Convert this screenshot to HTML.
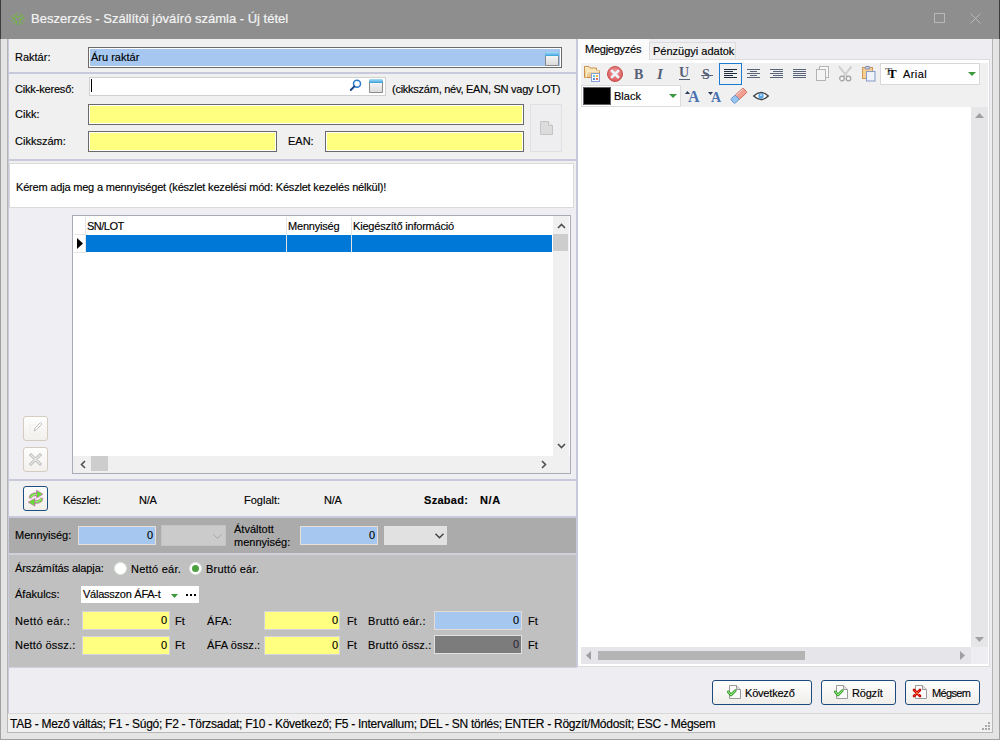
<!DOCTYPE html>
<html><head><meta charset="utf-8">
<style>
*{margin:0;padding:0;box-sizing:border-box}
html,body{width:1000px;height:741px;overflow:hidden;background:#e4e4e4;font-family:"Liberation Sans",sans-serif;font-size:11px;color:#000}
.a{position:absolute}
.t{position:absolute;white-space:nowrap;line-height:14px;font-size:11px;color:#000;-webkit-text-stroke:0.15px #000}
.f{position:absolute;border:1px solid #6a6a6a;box-shadow:inset 0 0 0 1px #fff}
.y{background:#ffff80}
.b{background:#a6c8f0}
svg{position:absolute;overflow:visible}
</style></head><body>
<!-- window frame -->
<div class="a" style="left:0;top:0;width:1px;height:740px;background:#a0a0a0"></div>
<div class="a" style="left:999px;top:0;width:1px;height:740px;background:#a0a0a0"></div>
<div class="a" style="left:0;top:739px;width:1000px;height:1px;background:#a0a0a0"></div>
<div class="a" style="left:0;top:740px;width:1000px;height:1px;background:#fff"></div>
<!-- title -->
<div class="a" style="left:0;top:0;width:1000px;height:39px;background:#8e8e8e"></div>
<div class="a" style="left:0;top:0;width:1px;height:39px;background:#3c3c3c"></div>
<div class="a" style="left:999px;top:0;width:1px;height:39px;background:#3c3c3c"></div>
<svg style="left:11px;top:12px" width="14" height="14" viewBox="0 0 14 14">
 <g fill="none" stroke="#76b648" stroke-width="1.3" stroke-linecap="round">
 <path d="M2.9 3.1Q7.2 6.7 11.5 3.1"/><path d="M1.2 5.5Q5.4 6.5 5.5 12.3"/><path d="M12.8 5.5Q8.5 6.5 8.5 12.5"/></g>
 <g fill="#76b648"><circle cx="5.5" cy="1.5" r="0.8"/><circle cx="8.5" cy="1.5" r="0.8"/><circle cx="1.1" cy="8.6" r="0.8"/><circle cx="2.6" cy="11.3" r="0.8"/><circle cx="13.1" cy="8.8" r="0.8"/><circle cx="11.5" cy="11.3" r="0.8"/></g>
</svg>
<div class="t" style="left:31px;top:11px;font-size:13px;line-height:16px;color:#f4f4f4;-webkit-text-stroke:0.2px #f4f4f4">Beszerzés - Szállítói jóváíró számla - Új tétel</div>
<div class="a" style="left:934px;top:13px;width:11px;height:10px;border:1px solid #b8b8b8"></div>
<svg style="left:970px;top:13px" width="11" height="11"><path d="M0.5 0.5L10.5 10.5M10.5 0.5L0.5 10.5" stroke="#b8b8b8" stroke-width="1"/></svg>

<!-- inner borders -->
<div class="a" style="left:7px;top:39px;width:1px;height:694px;background:#b4b4b4"></div>
<div class="a" style="left:8px;top:39px;width:1px;height:674px;background:#c8cadc"></div>
<div class="a" style="left:992px;top:39px;width:1px;height:694px;background:#b4b4b4"></div>

<!-- left panel bg -->
<div class="a" style="left:9px;top:39px;width:567px;height:628px;background:#f0f0f0"></div>
<div class="a" style="left:9px;top:208px;width:567px;height:271px;background:#efeff3"></div>
<div class="a" style="left:576px;top:39px;width:2px;height:628px;background:#c8cadc"></div>
<div class="a" style="left:578px;top:39px;width:414px;height:628px;background:#eeeef2"></div>
<div class="a" style="left:9px;top:667px;width:983px;height:46px;background:#eeeef2"></div>

<!-- Raktár -->
<div class="t" style="left:15px;top:50px">Raktár:</div>
<div class="f b" style="left:88px;top:47px;width:474px;height:21px;box-shadow:inset 0 0 0 1px #fff"></div>
<div class="t" style="left:91px;top:50px">Áru raktár</div>
<div class="a" style="left:545px;top:52px;width:14px;height:14px;background:linear-gradient(#fdfdfd,#dcdcdc);border:1px solid #8a8a8a;border-radius:2px 2px 0 0"></div>
<div class="a" style="left:545px;top:52px;width:14px;height:4px;background:linear-gradient(#a8e0fa,#3aa0dc);border-radius:2px 2px 0 0"></div>
<div class="a" style="left:9px;top:72px;width:567px;height:2px;background:#c8cadc"></div>

<!-- Cikk -->
<div class="t" style="left:15px;top:82px;letter-spacing:-0.18px">Cikk-kereső:</div>
<div class="f" style="left:89px;top:77px;width:297px;height:19px;background:#fff;border-color:#d0d0d0"></div>
<div class="a" style="left:91px;top:79px;width:1px;height:13px;background:#000"></div>
<svg style="left:349px;top:79px" width="13" height="13" viewBox="0 0 13 13"><circle cx="8" cy="4.8" r="3.5" fill="none" stroke="#2a78c8" stroke-width="1.5"/><path d="M5.4 7.4L1.8 11" stroke="#1a4488" stroke-width="2" stroke-linecap="round"/></svg>
<div class="a" style="left:369px;top:79px;width:14px;height:14px;background:linear-gradient(#fdfdfd,#dcdcdc);border:1px solid #8a8a8a;border-radius:2px 2px 0 0"></div>
<div class="a" style="left:369px;top:79px;width:14px;height:4px;background:linear-gradient(#a8e0fa,#3aa0dc);border-radius:2px 2px 0 0"></div>
<div class="t" style="left:392px;top:82px;letter-spacing:-0.25px">(cikkszám, név, EAN, SN vagy LOT)</div>
<div class="t" style="left:15px;top:107px">Cikk:</div>
<div class="f y" style="left:88px;top:104px;width:436px;height:21px"></div>
<div class="t" style="left:15px;top:134px">Cikkszám:</div>
<div class="f y" style="left:88px;top:131px;width:189px;height:21px"></div>
<div class="t" style="left:288px;top:134px">EAN:</div>
<div class="f y" style="left:325px;top:131px;width:199px;height:21px"></div>
<div class="a" style="left:530px;top:104px;width:32px;height:48px;border:1px solid #e0e0e4;background:#eeeef0"></div>
<svg style="left:540px;top:121px" width="13" height="14" viewBox="0 0 13 14"><path d="M0.5 0.5H8.5L12.5 4.5V13.5H0.5Z" fill="#dcdcdc" stroke="#c4c4c4"/><path d="M8.5 0.5V4.5H12.5" fill="#eee" stroke="#c4c4c4"/></svg>
<div class="a" style="left:9px;top:159px;width:567px;height:2px;background:#c8cadc"></div>

<!-- message -->
<div class="a" style="left:9px;top:163px;width:565px;height:45px;background:#fff;border:1px solid #dadada"></div>
<div class="t" style="left:16px;top:180px;letter-spacing:-0.19px">Kérem adja meg a mennyiséget (készlet kezelési mód: Készlet kezelés nélkül)!</div>

<!-- grid -->
<div class="a" style="left:72px;top:215px;width:499px;height:259px;border:1px solid #a8acb4;background:#fff"></div>
<div class="t" style="left:87px;top:219px;letter-spacing:-0.5px">SN/LOT</div>
<div class="t" style="left:288px;top:219px;letter-spacing:-0.2px">Mennyiség</div>
<div class="t" style="left:353px;top:219px;letter-spacing:-0.2px">Kiegészítő információ</div>
<div class="a" style="left:86px;top:235px;width:466px;height:17px;background:#0078d7"></div>
<div class="a" style="left:85px;top:217px;width:1px;height:35px;background:#e4e4e4"></div>
<div class="a" style="left:286px;top:217px;width:1px;height:35px;background:#e4e4e4"></div>
<div class="a" style="left:351px;top:217px;width:1px;height:35px;background:#e4e4e4"></div>
<div class="a" style="left:74px;top:234px;width:12px;height:1px;background:#e4e4e4"></div>
<div class="a" style="left:74px;top:252px;width:12px;height:1px;background:#e4e4e4"></div>
<svg style="left:77px;top:238px" width="7" height="11"><path d="M0 0L6 5.5L0 11Z" fill="#000"/></svg>
<!-- vscroll -->
<div class="a" style="left:553px;top:216px;width:16px;height:240px;background:#f0f0f0"></div>
<svg style="left:557px;top:223px" width="9" height="6"><path d="M1 5L4.5 1.5L8 5" fill="none" stroke="#505050" stroke-width="1.6"/></svg>
<div class="a" style="left:553px;top:234px;width:15px;height:17px;background:#cdcdcd"></div>
<svg style="left:557px;top:443px" width="9" height="6"><path d="M1 1L4.5 4.5L8 1" fill="none" stroke="#505050" stroke-width="1.6"/></svg>
<!-- hscroll -->
<div class="a" style="left:73px;top:456px;width:497px;height:17px;background:#f0f0f0"></div>
<svg style="left:80px;top:460px" width="6" height="9"><path d="M5 1L1.5 4.5L5 8" fill="none" stroke="#505050" stroke-width="1.6"/></svg>
<div class="a" style="left:91px;top:456px;width:17px;height:15px;background:#cdcdcd"></div>
<svg style="left:541px;top:460px" width="6" height="9"><path d="M1 1L4.5 4.5L1 8" fill="none" stroke="#505050" stroke-width="1.6"/></svg>

<div class="a" style="left:23px;top:416px;width:25px;height:25px;border:1px solid #d4ccc0;border-radius:3px;background:linear-gradient(#fefefe,#f2f0ec)"></div>
<svg style="left:29px;top:421px" width="14" height="14" viewBox="0 0 14 14"><rect x="1" y="4" width="9" height="9" fill="none" stroke="#f0f0f0"/><path d="M5 10L6 7L11.5 1.5L13 3L7.5 8.5Z" fill="#fff" stroke="#b8b8b8" stroke-width="0.9"/></svg>
<div class="a" style="left:23px;top:447px;width:25px;height:25px;border:1px solid #d4ccc0;border-radius:3px;background:linear-gradient(#fefefe,#f2f0ec)"></div>
<svg style="left:29px;top:453px" width="13" height="13" viewBox="0 0 13 13"><path d="M2 0.5L6.5 5L11 0.5L12.5 2L8 6.5L12.5 11L11 12.5L6.5 8L2 12.5L0.5 11L5 6.5L0.5 2Z" fill="#e8e8e8" stroke="#a8a8a8" stroke-width="0.9"/></svg>
<div class="a" style="left:9px;top:479px;width:567px;height:2px;background:#c8cadc"></div>

<!-- Készlet row -->
<div class="a" style="left:23px;top:486px;width:25px;height:25px;border:1px solid #1c4e80;border-radius:3px;background:linear-gradient(#fefefe,#f0eee8)"></div>
<svg style="left:28px;top:490px" width="16" height="17" viewBox="0 0 16 17">
 <path d="M8.5 0L15 4.2L8.5 8.2ZM1 7.8Q1.5 2.8 8.7 2.6L8.7 5.6Q4.2 5.6 3.2 8.4Z" fill="#66dd33" stroke="#e040d8" stroke-width="0.5" stroke-linejoin="round"/>
 <path d="M7 8.2L0 12.2L7 16.2ZM15 8.4Q14.5 13.4 7 13.6L7 10.6Q11.5 10.6 12.8 7.8Z" fill="#66dd33" stroke="#e040d8" stroke-width="0.5" stroke-linejoin="round"/>
 <path d="M2.8 7.5Q3.5 4.6 8.6 4.3M13.2 8.5Q12.5 11.6 7.2 12" fill="none" stroke="#aaf088" stroke-width="0.9"/>
</svg>
<div class="t" style="left:63px;top:493px;letter-spacing:-0.2px">Készlet:</div>
<div class="t" style="left:139px;top:493px;letter-spacing:-0.3px">N/A</div>
<div class="t" style="left:244px;top:493px">Foglalt:</div>
<div class="t" style="left:324px;top:493px;letter-spacing:-0.3px">N/A</div>
<div class="t" style="left:424px;top:493px;font-weight:bold;letter-spacing:0.3px">Szabad:</div>
<div class="t" style="left:480px;top:493px;font-weight:bold;letter-spacing:0.6px">N/A</div>
<div class="a" style="left:9px;top:516px;width:567px;height:2px;background:#c8cadc"></div>

<!-- Mennyiség row -->
<div class="a" style="left:9px;top:518px;width:567px;height:35px;background:#ababab"></div>
<div class="t" style="left:15px;top:528px">Mennyiség:</div>
<div class="a b" style="left:78px;top:526px;width:78px;height:19px;border:1px solid #e8e0d8"></div>
<div class="t" style="left:147px;top:528px">0</div>
<div class="a" style="left:161px;top:525px;width:65px;height:21px;background:#cbcbcb;border:1px solid #c4c4c4"></div>
<svg style="left:213px;top:534px" width="9" height="5"><path d="M0.5 0.5L4.5 4.5L8.5 0.5" fill="none" stroke="#a4a4a4" stroke-width="1"/></svg>
<div class="t" style="left:234px;top:523px;line-height:13px">Átváltott<br>mennyiség:</div>
<div class="a b" style="left:300px;top:526px;width:78px;height:19px;border:1px solid #e8e0d8"></div>
<div class="t" style="left:369px;top:528px">0</div>
<div class="a" style="left:384px;top:526px;width:63px;height:19px;background:#e1e1e1"></div>
<svg style="left:435px;top:533px" width="9" height="6"><path d="M0.5 0.8L4.5 4.8L8.5 0.8" fill="none" stroke="#404040" stroke-width="1.4"/></svg>
<div class="a" style="left:9px;top:553px;width:567px;height:2px;background:#d0d0dc"></div>

<!-- Árszámítás section -->
<div class="a" style="left:9px;top:555px;width:567px;height:112px;background:#c0c0c0"></div>
<div class="a" style="left:9px;top:667px;width:568px;height:1px;background:#d0d0e0"></div>
<div class="t" style="left:15px;top:561px;letter-spacing:-0.1px">Árszámítás alapja:</div>
<div class="a" style="left:114px;top:562px;width:13px;height:13px;border-radius:50%;background:#fff;border:1px solid #dde8dd"></div>
<div class="t" style="left:131px;top:562px;letter-spacing:0.23px">Nettó eár.</div>
<div class="a" style="left:189px;top:562px;width:13px;height:13px;border-radius:50%;background:#fff;border:1px solid #dde8dd"></div>
<div class="a" style="left:192px;top:565px;width:7px;height:7px;border-radius:50%;background:#4ca040"></div>
<div class="t" style="left:206px;top:562px;letter-spacing:0.2px">Bruttó eár.</div>
<div class="t" style="left:15px;top:587px">Áfakulcs:</div>
<div class="a" style="left:81px;top:586px;width:118px;height:17px;background:#fff"></div>
<div class="t" style="left:83px;top:587px;letter-spacing:-0.25px">Válasszon ÁFA-t</div>
<svg style="left:171px;top:594px" width="7" height="4"><path d="M0 0H7L3.5 4Z" fill="#3c9a3c"/></svg>
<div class="a" style="left:186px;top:594px;width:2px;height:2px;background:#000"></div>
<div class="a" style="left:190px;top:594px;width:2px;height:2px;background:#000"></div>
<div class="a" style="left:194px;top:594px;width:2px;height:2px;background:#000"></div>

<div class="t" style="left:15px;top:614px;letter-spacing:0.4px">Nettó eár.:</div>
<div class="a y" style="left:82px;top:611px;width:88px;height:19px;border:1px solid #d4d4dc"></div>
<div class="t" style="left:161px;top:613px">0</div>
<div class="t" style="left:175px;top:614px">Ft</div>
<div class="t" style="left:207px;top:614px;letter-spacing:0.3px">ÁFA:</div>
<div class="a y" style="left:264px;top:611px;width:76px;height:19px;border:1px solid #d4d4dc"></div>
<div class="t" style="left:332px;top:613px">0</div>
<div class="t" style="left:347px;top:614px">Ft</div>
<div class="t" style="left:368px;top:614px;letter-spacing:0.33px">Bruttó eár.:</div>
<div class="a b" style="left:434px;top:611px;width:88px;height:19px;border:1px solid #e4dcd4"></div>
<div class="t" style="left:513px;top:613px">0</div>
<div class="t" style="left:528px;top:614px">Ft</div>

<div class="t" style="left:15px;top:638px;letter-spacing:0.2px">Nettó össz.:</div>
<div class="a y" style="left:82px;top:636px;width:88px;height:19px;border:1px solid #d4d4dc"></div>
<div class="t" style="left:161px;top:638px">0</div>
<div class="t" style="left:175px;top:638px">Ft</div>
<div class="t" style="left:207px;top:638px;letter-spacing:0.13px">ÁFA össz.:</div>
<div class="a y" style="left:264px;top:636px;width:76px;height:19px;border:1px solid #d4d4dc"></div>
<div class="t" style="left:332px;top:638px">0</div>
<div class="t" style="left:347px;top:638px">Ft</div>
<div class="t" style="left:368px;top:638px;letter-spacing:0.18px">Bruttó össz.:</div>
<div class="a" style="left:434px;top:635px;width:88px;height:19px;background:#7c7c7c;border:1px solid #e0e0e0"></div>
<div class="t" style="left:513px;top:637px;color:#302840;-webkit-text-stroke:0.15px #302840">0</div>
<div class="t" style="left:528px;top:638px">Ft</div>

<!-- right panel: tabs -->
<div class="a" style="left:578px;top:39px;width:71px;height:21px;background:#fbfbfb"></div>
<div class="t" style="left:585px;top:42px;letter-spacing:-0.25px">Megjegyzés</div>
<div class="a" style="left:649px;top:42px;width:87px;height:18px;background:#f0f0f0;border:1px solid #dcdcdc;border-bottom:none"></div>
<div class="t" style="left:653px;top:44px">Pénzügyi adatok</div>
<div class="a" style="left:578px;top:59px;width:412px;height:608px;background:#fff;border:1px solid #dcdcdc;border-left:none"></div>
<div class="a" style="left:578px;top:59px;width:71px;height:1px;background:#fbfbfb"></div>
<div class="a" style="left:581px;top:63px;width:407px;height:44px;background:#f0f0f0"></div>

<!-- toolbar row 1 -->
<svg style="left:584px;top:66px" width="16" height="16" viewBox="0 0 16 16">
 <defs><linearGradient id="fg" x1="0" y1="0" x2="0" y2="1"><stop offset="0" stop-color="#fdf0c8"/><stop offset="1" stop-color="#e8c080"/></linearGradient></defs>
 <path d="M0.5 11.5V0.5H5L6 2H12.5V4.5H15.5V11.5Z" fill="url(#fg)" stroke="#c8904a" stroke-width="1"/>
 <path d="M2 11.5L3.5 5H15.5" fill="none" stroke="#fff4d8" stroke-width="1"/>
 <rect x="7.5" y="7.5" width="8" height="8" fill="#fafcff" stroke="#8a9ed8" stroke-width="1"/>
 <rect x="9" y="9" width="2" height="2" fill="#5cc8d8"/><rect x="12" y="9" width="2" height="2" fill="#f0b838"/>
 <rect x="9" y="12" width="2" height="2" fill="#5c88e0"/><rect x="12" y="12" width="2" height="2" fill="#e87058"/>
</svg>
<svg style="left:607px;top:66px" width="16" height="16" viewBox="0 0 16 16">
 <defs><radialGradient id="rg" cx="0.5" cy="0.4" r="0.6"><stop offset="0" stop-color="#f4a0a0"/><stop offset="1" stop-color="#d85858"/></radialGradient></defs>
 <circle cx="8" cy="8" r="7.5" fill="url(#rg)" stroke="#c85050" stroke-width="1"/>
 <path d="M5 5L11 11M11 5L5 11" stroke="#eef2fa" stroke-width="2.6" stroke-linecap="square"/>
</svg>
<div class="a" style="left:634px;top:67px;font:bold 14px 'Liberation Serif';line-height:16px;color:#566078">B</div>
<div class="a" style="left:657px;top:66px;font:italic bold 15px 'Liberation Serif';line-height:16px;color:#566078">I</div>
<div class="a" style="left:679px;top:65px;font:bold 14px 'Liberation Serif';line-height:16px;color:#566078">U</div>
<div class="a" style="left:679px;top:79px;width:11px;height:1px;background:#566078"></div>
<div class="a" style="left:702px;top:67px;font:bold 14px 'Liberation Serif';line-height:16px;color:#566078">S</div>
<div class="a" style="left:701px;top:75px;width:12px;height:1px;background:#566078"></div>
<div class="a" style="left:719px;top:63px;width:23px;height:22px;border:1.5px solid #1a7ad4;background:#f0f0f0"></div>
<svg style="left:724px;top:69px" width="13" height="9"><g fill="#1e2a40"><rect y="0" width="13" height="1"/><rect y="2" width="9" height="1"/><rect y="4" width="13" height="1"/><rect y="6" width="9" height="1"/><rect y="8" width="13" height="1"/></g></svg>
<svg style="left:747px;top:69px" width="13" height="9"><g fill="#5a6478"><rect y="0" width="13" height="1"/><rect x="3" y="2" width="7" height="1"/><rect y="4" width="13" height="1"/><rect x="3" y="6" width="7" height="1"/><rect y="8" width="13" height="1"/></g></svg>
<svg style="left:770px;top:69px" width="13" height="9"><g fill="#5a6478"><rect y="0" width="13" height="1"/><rect x="3" y="2" width="10" height="1"/><rect y="4" width="13" height="1"/><rect x="3" y="6" width="10" height="1"/><rect y="8" width="13" height="1"/></g></svg>
<svg style="left:793px;top:69px" width="13" height="9"><g fill="#5a6478"><rect y="0" width="13" height="1"/><rect y="2" width="13" height="1"/><rect y="4" width="13" height="1"/><rect y="6" width="13" height="1"/><rect y="8" width="13" height="1"/></g></svg>
<svg style="left:816px;top:66px" width="14" height="16" viewBox="0 0 14 16"><rect x="3.5" y="0.5" width="9" height="11" fill="#f8f8f8" stroke="#b4b4b4"/><rect x="0.5" y="3.5" width="9" height="11" fill="#f4f4f4" stroke="#b4b4b4"/></svg>
<svg style="left:838px;top:66px" width="15" height="16" viewBox="0 0 15 16"><path d="M1 0.5L9.5 11M13.5 0.5L5 11" stroke="#b8b8b8" stroke-width="1.6"/><path d="M1 0.5L9.5 11M13.5 0.5L5 11" stroke="#f8f8f8" stroke-width="0.5"/><circle cx="4" cy="12.5" r="2.3" fill="#f4f4f4" stroke="#a0a0a0" stroke-width="1.2"/><circle cx="10.5" cy="12.5" r="2.3" fill="#f4f4f4" stroke="#a0a0a0" stroke-width="1.2"/></svg>
<svg style="left:862px;top:66px" width="14" height="16" viewBox="0 0 14 16"><rect x="0.5" y="1.5" width="10" height="11" fill="#f4d090" stroke="#d09858"/><rect x="3" y="0.5" width="5" height="2.5" rx="1" fill="#c0c8e0" stroke="#8890b0"/><rect x="4.5" y="5.5" width="8.5" height="9.5" fill="#eef2fa" stroke="#8898c8"/></svg>
<div class="a" style="left:880px;top:63px;width:100px;height:22px;background:#fff;border:1px solid #d8d8d8"></div>
<div class="a" style="left:885px;top:65px;font:bold 11px 'Liberation Serif';line-height:12px;color:#707070">T</div>
<div class="a" style="left:888px;top:67px;font:bold 13px 'Liberation Serif';line-height:14px;color:#000">T</div>
<div class="t" style="left:903px;top:67px;letter-spacing:0.4px">Arial</div>
<svg style="left:968px;top:72px" width="8" height="4"><path d="M0 0H8L4 4Z" fill="#3c9a3c"/></svg>

<!-- toolbar row 2 -->
<div class="a" style="left:581px;top:85px;width:100px;height:22px;background:#fff;border:1px solid #dcdcdc"></div>
<div class="a" style="left:583px;top:87px;width:28px;height:18px;background:#000;border:1px solid #606060"></div>
<div class="t" style="left:614px;top:89px">Black</div>
<svg style="left:669px;top:94px" width="8" height="4"><path d="M0 0H8L4 4Z" fill="#3c9a3c"/></svg>
<div class="a" style="left:688px;top:89px;font:bold 16px 'Liberation Serif';line-height:16px;color:#4a72b0">A</div>
<svg style="left:685px;top:91px" width="5" height="3"><path d="M0 3L2.5 0L5 3Z" fill="#2a3a58"/></svg>
<div class="a" style="left:711px;top:91px;font:bold 14px 'Liberation Serif';line-height:14px;color:#4a72b0">A</div>
<svg style="left:708px;top:92px" width="5" height="3"><path d="M0 0L2.5 3L5 0Z" fill="#2a3a58"/></svg>
<svg style="left:731px;top:89px" width="16" height="14" viewBox="0 0 16 14"><g transform="translate(7.8 6.8) rotate(-42)"><rect x="-2.5" y="-3" width="11" height="6" rx="1.2" fill="#f0a090" stroke="#d06858" stroke-width="0.8"/><rect x="-8.5" y="-3" width="6.5" height="6" rx="1.2" fill="#98c4f0" stroke="#5a8cc8" stroke-width="0.8"/><path d="M-1.5 -2.2H7.5" stroke="#fde0d8" stroke-width="0.8"/></g></svg>
<svg style="left:753px;top:91px" width="16" height="10" viewBox="0 0 16 10"><path d="M0.7 5Q8 -2 15.3 5Q8 12 0.7 5Z" fill="#fafafa" stroke="#404040" stroke-width="1.3"/><circle cx="8" cy="5" r="2.7" fill="#58a8e8"/><circle cx="8" cy="4.2" r="0.9" fill="#d0e8ff"/></svg>

<!-- editor -->
<div class="a" style="left:971px;top:107px;width:17px;height:540px;background:#e6e6e8"></div>
<svg style="left:975px;top:113px" width="9" height="5"><path d="M0 5L4.5 0L9 5Z" fill="#a0a0a0"/></svg>
<svg style="left:975px;top:637px" width="9" height="5"><path d="M0 0L4.5 5L9 0Z" fill="#a0a0a0"/></svg>
<div class="a" style="left:581px;top:647px;width:390px;height:17px;background:#e6e6ea"></div>
<div class="a" style="left:971px;top:647px;width:17px;height:17px;background:#eeeef2"></div>
<svg style="left:586px;top:651px" width="5" height="9"><path d="M5 0L0 4.5L5 9Z" fill="#a0a0a0"/></svg>
<svg style="left:960px;top:651px" width="5" height="9"><path d="M0 0L5 4.5L0 9Z" fill="#a0a0a0"/></svg>
<div class="a" style="left:598px;top:651px;width:207px;height:9px;background:#b4b4b4"></div>

<!-- buttons -->
<div class="a" style="left:712px;top:680px;width:100px;height:25px;border:1.5px solid #1c4a7c;border-radius:3px;background:linear-gradient(#fefefe,#f0eeea)"></div>
<svg style="left:727px;top:685px" width="15" height="15" viewBox="0 0 15 15"><path d="M2.5 0.5H9.5L13.5 4.5V13.5H2.5Z" fill="#fafafa" stroke="#9a9a9a"/><path d="M9.5 0.5V4.5H13.5" fill="#e4e4e4" stroke="#9a9a9a"/><path d="M1.3 6.8L4 10L8.3 5.6" fill="none" stroke="#208a20" stroke-width="2.6" stroke-linejoin="round" stroke-linecap="round"/><path d="M1.3 6.8L4 10L8.3 5.6" fill="none" stroke="#9af078" stroke-width="1.1" stroke-linejoin="round" stroke-linecap="round"/></svg>
<div class="t" style="left:745px;top:686px;letter-spacing:-0.2px">Következő</div>
<div class="a" style="left:821px;top:680px;width:75px;height:25px;border:1.5px solid #1c4a7c;border-radius:3px;background:linear-gradient(#fefefe,#f0eeea)"></div>
<svg style="left:834px;top:685px" width="15" height="15" viewBox="0 0 15 15"><path d="M2.5 0.5H9.5L13.5 4.5V13.5H2.5Z" fill="#fafafa" stroke="#9a9a9a"/><path d="M9.5 0.5V4.5H13.5" fill="#e4e4e4" stroke="#9a9a9a"/><path d="M1.3 6.8L4 10L8.3 5.6" fill="none" stroke="#208a20" stroke-width="2.6" stroke-linejoin="round" stroke-linecap="round"/><path d="M1.3 6.8L4 10L8.3 5.6" fill="none" stroke="#9af078" stroke-width="1.1" stroke-linejoin="round" stroke-linecap="round"/></svg>
<div class="t" style="left:852px;top:686px;letter-spacing:-0.2px">Rögzít</div>
<div class="a" style="left:905px;top:680px;width:75px;height:25px;border:1.5px solid #1c4a7c;border-radius:3px;background:linear-gradient(#fefefe,#f0eeea)"></div>
<svg style="left:913px;top:685px" width="15" height="15" viewBox="0 0 15 15"><path d="M2.5 0.5H9.5L13.5 4.5V13.5H2.5Z" fill="#fafafa" stroke="#9a9a9a"/><path d="M9.5 0.5V4.5H13.5" fill="#e4e4e4" stroke="#9a9a9a"/><path d="M1 5L7 11M7 5L1 11" stroke="#c80000" stroke-width="2.6" stroke-linecap="round"/><path d="M1.5 5.5L6.5 10.5M6.5 5.5L1.5 10.5" stroke="#ff6030" stroke-width="1"/></svg>
<div class="t" style="left:932px;top:686px;letter-spacing:-0.65px">Mégsem</div>

<!-- status -->
<div class="a" style="left:7px;top:713px;width:986px;height:20px;background:#f0f0f0;border:1px solid #b8b8b8;border-top-color:#d8d8d8"></div>
<div class="t" style="left:10px;top:717px;font-size:12px;letter-spacing:-0.27px">TAB - Mező váltás; F1 - Súgó; F2 - Törzsadat; F10 - Következő; F5 - Intervallum; DEL - SN törlés; ENTER - Rögzít/Módosít; ESC - Mégsem</div>
<div class="a" style="left:988px;top:722px;width:2px;height:2px;background:#a8a8a8;box-shadow:0 3px #a8a8a8,-3px 3px #a8a8a8,0 6px #a8a8a8,-3px 6px #a8a8a8,-6px 6px #a8a8a8"></div>
</body></html>
